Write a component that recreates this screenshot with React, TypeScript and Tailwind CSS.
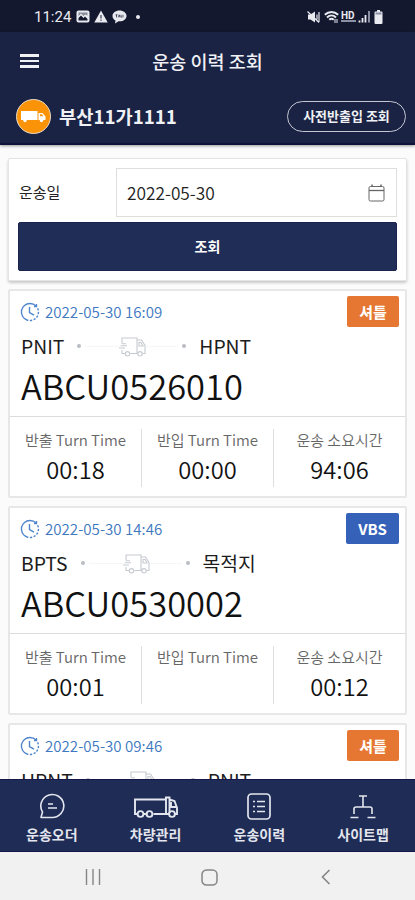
import React from 'react'

interface Trip {
  date: string
  badge: string
  badgeClass: string
  from: string
  to: string
  container: string
  outTime: string
  inTime: string
  duration: string
}

const trips: Trip[] = [
  {
    date: '2022-05-30 16:09',
    badge: '셔틀',
    badgeClass: 'w-[52px] bg-[#e57733]',
    from: 'PNIT',
    to: 'HPNT',
    container: 'ABCU0526010',
    outTime: '00:18',
    inTime: '00:00',
    duration: '94:06',
  },
  {
    date: '2022-05-30 14:46',
    badge: 'VBS',
    badgeClass: 'w-[53px] bg-[#3562b8]',
    from: 'BPTS',
    to: '목적지',
    container: 'ABCU0530002',
    outTime: '00:01',
    inTime: '',
    duration: '00:12',
  },
  {
    date: '2022-05-30 09:46',
    badge: '셔틀',
    badgeClass: 'w-[52px] bg-[#e57733]',
    from: 'HPNT',
    to: 'PNIT',
    container: '',
    outTime: '',
    inTime: '',
    duration: '',
  },
]

function StatusBar(): React.ReactElement {
  return (
    <div className="flex h-8 shrink-0 items-center justify-between bg-[#14182f] pl-[34px] pr-[32px] pt-px text-[#e8eaf0]">
      <div className="flex items-center">
        <span className="w-[38px] font-['Roboto',sans-serif] text-[15px] leading-6">11:24</span>
        <svg className="ml-1 h-[13px] w-[14px]" viewBox="0 0 14 13">
          <rect x="0.5" y="0.5" width="13" height="12" rx="2" fill="currentColor" />
          <path d="M2.5 10.5V8l2.5-2.5L7.500 8 9 6.500l2.500 2.500v1.500z" fill="#14182f" />
          <path d="M2.500 2.500h9v3L9 4.500 7.500 6 5 3.500 2.500 6z" fill="#14182f" opacity="0.45" />
        </svg>
        <svg className="ml-[4px] h-[13px] w-[14px]" viewBox="0 0 14 13">
          <path d="M7 .5 13.700 12.500H.3z" fill="currentColor" />
          <path d="M7 5v3.500M7 9.500v1.300" stroke="#14182f" strokeWidth="1" />
        </svg>
        <svg className="ml-[4px] h-[14px] w-[15px]" viewBox="0 0 15 14">
          <path d="M7.500.5C3.600.5.5 2.900.5 6c0 1.900 1.200 3.600 3 4.500L3 13.500l3.500-2.200c4.500.5 8-2.100 8-5.300 0-3.100-3.100-5.500-7-5.500z" fill="currentColor" />
          <path d="M3.500 4.800h2M4.500 4.800v2.600M6.400 7.400l.8-2.600.8 2.600M9 4.800v2.300h1M11 4.800v2.600" stroke="#14182f" strokeWidth="0.700" fill="none" />
        </svg>
        <span className="ml-[9px] h-1 w-1 rounded-full bg-[#e8eaf0]" />
      </div>
      <div className="flex items-center">
        <svg className="h-[14px] w-[13px]" viewBox="0 0 13 14">
          <path d="M1 4.500h2.500L8 1.500v11L3.500 9.500H1z" fill="currentColor" />
          <path d="M10 4.500v5M12 2v10M.5 1.500l11.500 11" stroke="currentColor" strokeWidth="1.200" />
        </svg>
        <svg className="ml-[4px] h-[14px] w-[15px]" viewBox="0 0 15 14">
          <path d="M.8 4.800c4-3.800 9.400-3.800 13.400 0M3 7.400c2.700-2.500 6.300-2.500 9 0M5.300 9.700c1.300-1.200 3.100-1.200 4.400 0" fill="none" stroke="currentColor" strokeWidth="2" />
          <path d="M11 9v4M13 9v4" stroke="currentColor" />
        </svg>
        <span className="ml-[2px] flex w-[15px] flex-col">
          <span className="font-['Roboto',sans-serif] text-[10px] font-bold leading-[9px]">HD</span>
          <span className="h-[2px] w-full bg-[#8b8fa2]" />
        </span>
        <svg className="ml-[2px] h-[13px] w-[13px]" viewBox="0 0 13 13">
          <path d="M1.500 10.500v2M4.500 8v4.500M7.500 5v7.500" stroke="currentColor" strokeWidth="1.800" />
          <path d="M11 1v11.500" stroke="#8b8fa2" strokeWidth="2" />
        </svg>
        <svg className="ml-[3px] h-[14px] w-[9px]" viewBox="0 0 9 14">
          <path d="M3 0h3v1.500h1.500a1 1 0 0 1 1 1V13a1 1 0 0 1-1 1h-6a1 1 0 0 1-1-1V2.500a1 1 0 0 1 1-1H3z" fill="currentColor" />
          <path d="M1.500 2.500h6v2h-6z" fill="#8b8fa2" />
        </svg>
      </div>
    </div>
  )
}

function Header(): React.ReactElement {
  return (
    <header className="relative z-10 h-[113px] shrink-0 border-b-2 border-[#11123c] bg-[#1a2344] text-[#f0f1f5] shadow-[0_1px_3px_rgba(0,0,0,0.4)]">
      <div className="flex h-[57px] items-center px-5">
        <button type="button" aria-label="메뉴" className="flex w-[19px] flex-col gap-[3px] pt-px">
          <span className="h-[2.500px] bg-[#f0f1f5]" />
          <span className="h-[2.500px] bg-[#f0f1f5]" />
          <span className="h-[2.500px] bg-[#f0f1f5]" />
        </button>
        <h1 className="flex-1 pr-[19px] text-center text-[18.500px] font-medium leading-6">운송 이력 조회</h1>
      </div>
      <div className="flex h-[54px] items-center justify-between pl-4 pr-[9px]">
        <div className="flex items-center gap-2">
          <span className="flex h-[35px] w-[35px] items-center justify-center rounded-full border border-[#e9dcc6] bg-[#fb9308]">
            <svg className="h-[13px] w-[25px]" viewBox="0 0 25 13">
              <path d="M0 1h16.500v9H0zM17.500 3h4l3 3.500V10h-7z" fill="#fff" />
              <path d="M19 4.300h2l1.500 2H19z" fill="#fb9308" />
              <circle cx="4" cy="10.500" r="1.700" fill="#fff" />
              <circle cx="20.500" cy="10.500" r="1.700" fill="#fff" />
            </svg>
          </span>
          <span className="text-[18.700px] font-bold leading-6">부산11가1111</span>
        </div>
        <button
          type="button"
          className="h-[31px] w-[119px] rounded-full border border-[#c3c7d2] text-[13px] font-bold leading-[28px]"
        >
          사전반출입 조회
        </button>
      </div>
    </header>
  )
}

function SearchPanel(): React.ReactElement {
  return (
    <section className="h-[123px] shrink-0 rounded-[2px] border border-[#e4e4e4] bg-white px-[9px] pt-[9px] shadow-[0_2px_3px_rgba(0,0,0,0.2)]">
      <div className="flex items-center">
        <span className="w-[98px] pb-px pl-px text-[15px] leading-6 text-[#222]">운송일</span>
        <div className="flex h-[49px] flex-1 items-center justify-between border border-[#dedede] pl-[10px] pr-[11px]">
          <span className="text-[17.300px] font-[350] leading-6 text-[#222]">2022-05-30</span>
          <svg className="h-[18px] w-[17px]" viewBox="0 0 17 18" fill="none" stroke="#666">
            <rect x="1" y="2.500" width="15" height="14.500" rx="1.500" />
            <path d="M1 6.500h15" strokeWidth="1.300" />
            <path d="M4 .5v2.500M13 .5v2.500" strokeWidth="1.500" />
          </svg>
        </div>
      </div>
      <button
        type="button"
        className="mt-[5px] h-[49px] w-full rounded-[2px] border border-[#1a2350] bg-[#202e57] pb-px text-[14px] font-bold leading-6 text-white"
      >
        조회
      </button>
    </section>
  )
}

function ClockIcon(): React.ReactElement {
  return (
    <svg className="h-5 w-5" viewBox="0 0 20 20" fill="none" stroke="#4f86cc" strokeWidth="1.400">
      <path d="M7 18A8.500 8.500 0 0 1 10 1.500c2.500 0 4.500.9 6 2.500" />
      <path d="M17.600 6.300A8.500 8.500 0 0 1 7 18" strokeDasharray="2.200 1.500" />
      <path d="M9.500 5v5.500l4.500 2.700M16.500 2v2.500h-2.500" />
    </svg>
  )
}

function DeliveryIcon(): React.ReactElement {
  return (
    <svg className="mt-px h-5 w-[27px]" viewBox="0 0 27 20" fill="none" stroke="#c6cad0" strokeWidth="1.100">
      <path d="M3 6.500V1h15v15.500h-6.500M3 13v3.500h3M18 3h4.500l3.500 5.500v8h-2.500M18 16.500h1M20 5.500h2l2 3.500h-4z" />
      <path d="M0 11h6M1.500 8.800h6.500M3 6.700h4" />
      <circle cx="8.500" cy="16.800" r="2.200" />
      <circle cx="21" cy="16.800" r="2.200" />
    </svg>
  )
}

function TimeCell({ label, value }: { label: string; value: string }): React.ReactElement {
  return (
    <div className="flex flex-1 flex-col items-center">
      <span className="whitespace-nowrap text-[15px] font-[350] leading-[22px] text-[#666]">{label}</span>
      <span className="h-9 text-[23.700px] font-[350] leading-9 text-[#111]">{value}</span>
    </div>
  )
}

function TripCard({ trip }: { trip: Trip }): React.ReactElement {
  return (
    <article className="h-[209px] shrink-0 rounded-[2px] border-2 border-[#e7e7e7] bg-white">
      <div className="h-[126px] border-b border-[#dcdcdc] pl-[10px] pr-[6px] pt-[5px]">
        <div className="flex h-[31px] items-center justify-between">
          <div className="flex items-center gap-[5px]">
            <ClockIcon />
            <span className="pb-[2px] text-[15.100px] font-[350] leading-6 text-[#4078bf]">{trip.date}</span>
          </div>
          <span
            className={`flex h-[31px] items-center justify-center rounded-[2px] text-[15px] font-bold leading-6 text-white ${trip.badgeClass}`}
          >
            {trip.badge}
          </span>
        </div>
        <div className="mt-[5px] flex h-7 items-center pl-px text-[19.300px] leading-7 text-[#1c1c1c]">
          <span>{trip.from}</span>
          <span className="ml-[13px] h-1 w-1 rounded-full bg-[#b9bcc2]" />
          <span className="ml-1 h-px w-[34px] bg-[#f4f6f8]" />
          <DeliveryIcon />
          <span className="mr-1 h-px w-[32px] bg-[#f4f6f8]" />
          <span className="mr-[13px] h-1 w-1 rounded-full bg-[#b9bcc2]" />
          <span>{trip.to}</span>
        </div>
        <div className="h-[50px] pl-px text-[34.500px] font-[350] leading-[50px] text-[#111]">{trip.container}</div>
      </div>
      <div className="flex pt-3">
        <TimeCell label="반출 Turn Time" value={trip.outTime} />
        <span className="h-[58px] w-px bg-[#dedede]" />
        <TimeCell label="반입 Turn Time" value={trip.inTime} />
        <span className="h-[58px] w-px bg-[#dedede]" />
        <TimeCell label="운송 소요시간" value={trip.duration} />
      </div>
    </article>
  )
}

function NavItem({ label, children }: { label: string; children: React.ReactNode }): React.ReactElement {
  return (
    <div className="flex flex-1 flex-col items-center">
      <div className="flex h-8 items-center">{children}</div>
      <span className="text-[14px] font-bold leading-6">{label}</span>
    </div>
  )
}

function BottomNav(): React.ReactElement {
  return (
    <nav className="relative z-10 flex h-[73px] shrink-0 border-y border-[#14164c] bg-[#1f2c56] pt-[10px] text-[#e3e6ee]">
      <NavItem label="운송오더">
        <svg className="h-[26px] w-[26px]" viewBox="0 0 26 26" fill="none" stroke="currentColor" strokeWidth="1.600">
          <path d="M2 24.500l1.500-5.500A11.500 11.500 0 1 1 13 24.500z" strokeLinejoin="round" />
          <path d="M9 11h5M9 15h9" />
        </svg>
      </NavItem>
      <NavItem label="차량관리">
        <svg className="mt-[2px] h-[22px] w-[44px]" viewBox="0 0 44 22" fill="none" stroke="currentColor" strokeWidth="1.900">
          <path d="M3.500 18H1V3.500h31V18H19.500M10 18h3.500M35 18h-3M31 1.500h4.500V17M35.500 3.500l5 1.500 2.500 7v6h-2M37 6v5h5" />
          <circle cx="6.500" cy="18" r="2.900" />
          <circle cx="15.500" cy="18" r="2.900" />
          <circle cx="38" cy="18" r="2.900" />
        </svg>
      </NavItem>
      <NavItem label="운송이력">
        <svg className="h-[27px] w-6" viewBox="0 0 24 27" fill="none" stroke="currentColor" strokeWidth="1.700">
          <rect x="1" y="1" width="22" height="25" rx="3.500" />
          <path d="M6 8.500h2M6 13.500h2M6 18.500h2M10 8.500h8M10 13.500h8M10 18.500h8" />
        </svg>
      </NavItem>
      <NavItem label="사이트맵">
        <svg className="h-[25px] w-[26px]" viewBox="0 0 26 25" fill="none" stroke="currentColor" strokeWidth="1.600">
          <path d="M9 2h8M13 2v11M4 20v-5a2 2 0 0 1 2-2h14a2 2 0 0 1 2 2v5M.5 23.500h8M17.500 23.500h8" />
        </svg>
      </NavItem>
    </nav>
  )
}

function SystemBar(): React.ReactElement {
  return (
    <div className="flex h-12 shrink-0 items-center justify-between bg-[#f1f1f1] pl-[85px] pr-[84px] pt-[2px]">
      <svg className="h-4 w-4" viewBox="0 0 16 16" stroke="#858585" strokeWidth="1.400">
        <path d="M1.500 0v16M8 0v16M14.500 0v16" />
      </svg>
      <svg className="mr-[4px] h-[17px] w-[17px]" viewBox="0 0 17 17" fill="none" stroke="#858585" strokeWidth="1.500">
        <rect x="1" y="1" width="15" height="15" rx="4.500" />
      </svg>
      <svg className="h-4 w-[10px]" viewBox="0 0 10 16" fill="none" stroke="#858585" strokeWidth="1.600">
        <path d="M8.500 1 1.500 8l7 7" />
      </svg>
    </div>
  )
}

export default function App(): React.ReactElement {
  return (
    <div className="flex h-[900px] w-[415px] flex-col overflow-hidden bg-[#fbfbfb] font-['Noto_Sans_CJK_KR',sans-serif]">
      <StatusBar />
      <Header />
      <main className="flex min-h-0 flex-1 flex-col gap-2 overflow-hidden px-2 pt-[13px]">
        <SearchPanel />
        {trips.map((trip) => (
          <TripCard key={trip.date} trip={trip} />
        ))}
      </main>
      <BottomNav />
      <SystemBar />
    </div>
  )
}
